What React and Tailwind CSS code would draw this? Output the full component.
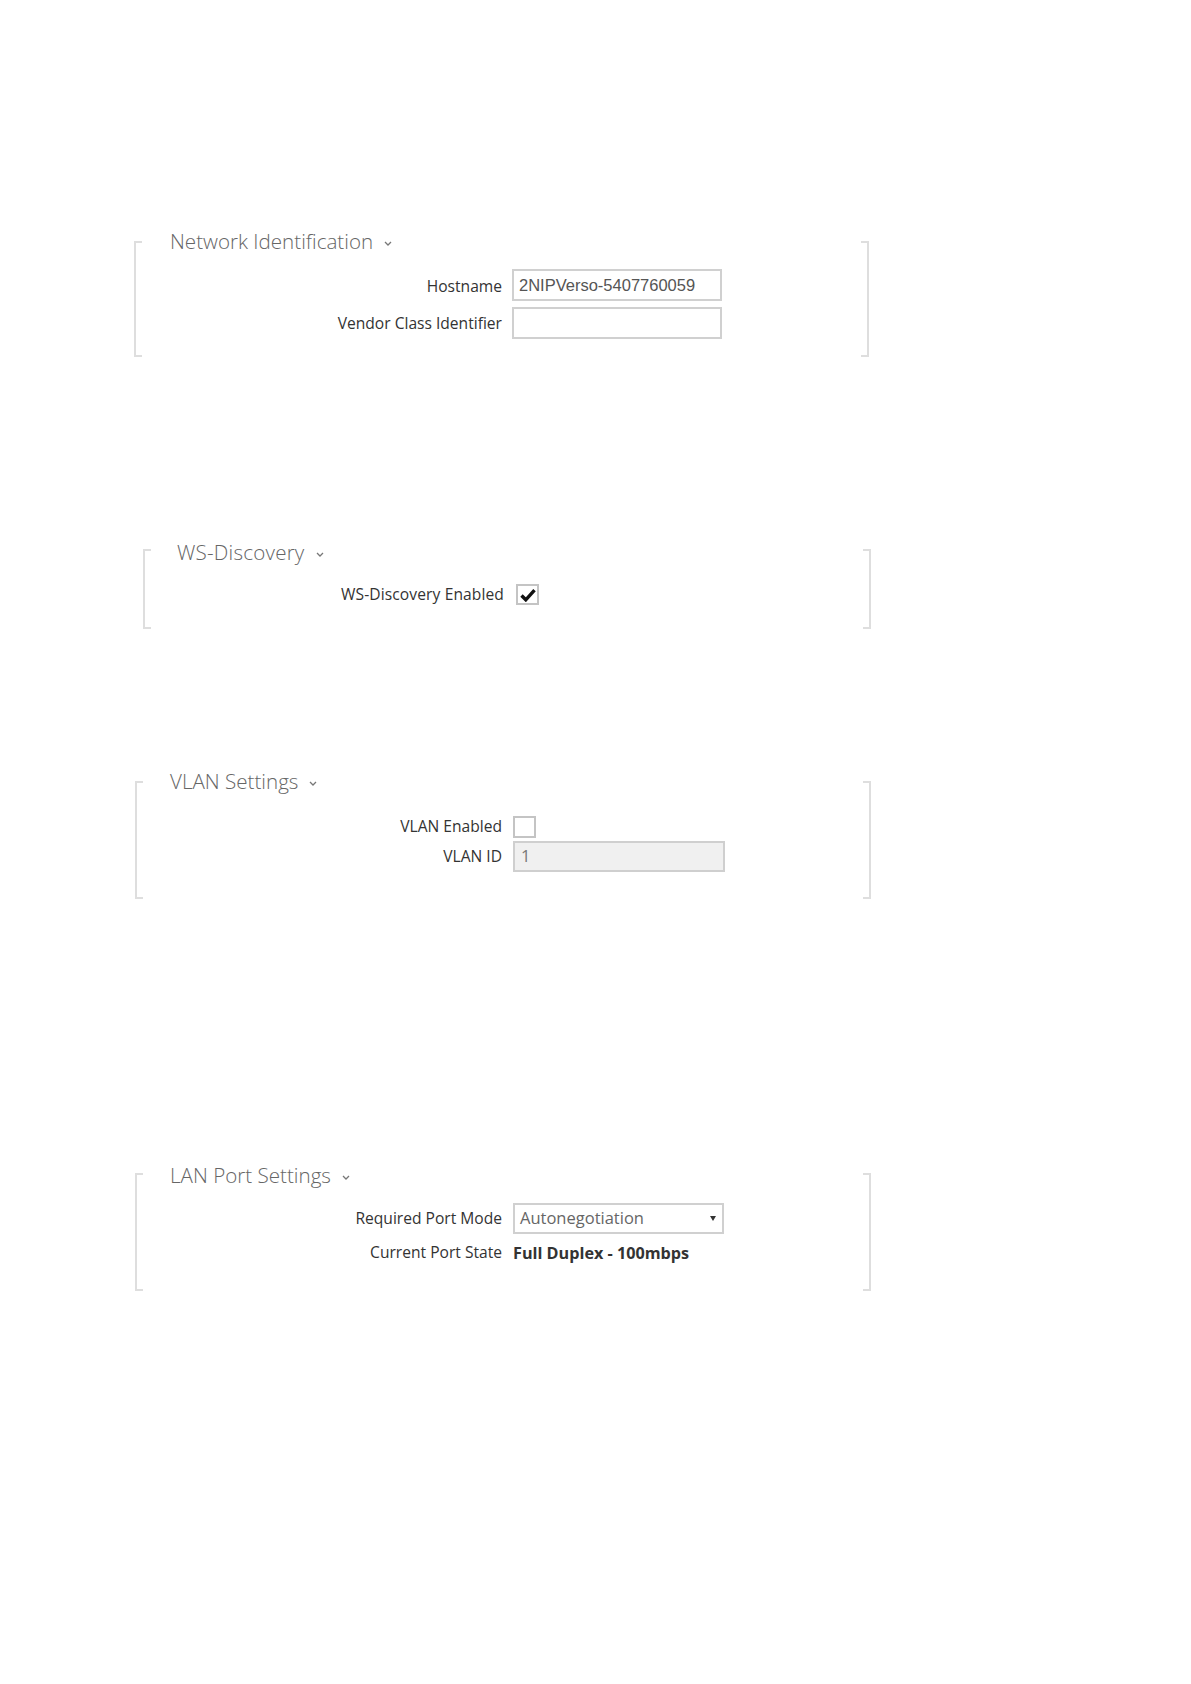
import React from "react";

const FONT = { fontFamily: '"Open Sans", "Noto Sans", sans-serif' };

function Chevron() {
  return (
    <svg width="8" height="5" viewBox="0 0 8 5" className="ml-[11px] mt-[4px]">
      <polyline points="1,1 4,4 7,1" fill="none" stroke="#777" strokeWidth="1.3" />
    </svg>
  );
}

function Section({ width, left, mt, titleMt, titleMl, title, pb, children, tracking }) {
  return (
    <div className="flex" style={{ width, marginLeft: left, marginTop: mt }}>
      <div className="w-[8px] shrink-0 border-l-2 border-t-2 border-b-2 border-[#dedede]" />
      <div className="flex-1 flex flex-col" style={{ marginTop: titleMt, paddingBottom: pb }}>
        <div className="flex items-center h-[28px]" style={{ marginLeft: titleMl }}>
          <span className={`text-[20.6px] font-light text-[#666] leading-[28px] ${tracking ? "tracking-[0.2px]" : ""}`}>{title}</span>
          <Chevron />
        </div>
        {children}
      </div>
      <div className="w-[8px] shrink-0 border-r-2 border-t-2 border-b-2 border-[#dedede]" />
    </div>
  );
}

function Row({ labelW, gap, h, mt, label, children, tracking, labelPt = 0 }) {
  return (
    <div className="flex items-center" style={{ marginTop: mt, height: h }}>
      <div
        className={`text-right text-[15.6px] text-[#333] shrink-0 whitespace-nowrap ${tracking ? "tracking-[0.1px]" : ""}`}
        style={{ width: labelW, marginRight: gap, paddingTop: labelPt }}
      >
        {label}
      </div>
      {children}
    </div>
  );
}

function CheckBox({ checked, w, h }) {
  return (
    <div
      className="border-2 border-[#c4c4c4] bg-white flex items-center justify-center"
      style={{ width: w, height: h }}
    >
      {checked && (
        <svg width="16" height="14" viewBox="0 0 16 14">
          <path d="M1.5 7.5 L5.8 11.8 L14.5 2.2" fill="none" stroke="#111" strokeWidth="3.4" strokeLinejoin="miter" />
        </svg>
      )}
    </div>
  );
}

export default function App() {
  return (
    <div className="bg-white min-h-[1684px] w-[1191px] flex flex-col" style={FONT}>
      <Section width={735} left={134} mt={241} titleMt={-14} titleMl={28} title="Network Identification" pb={18}>
        <Row labelW={360} gap={10} h={32} mt={14} label="Hostname" labelPt={3}>
          <div className="w-[210px] h-[32px] border-2 border-[#d0d0d0] flex items-center pl-[5px] text-[16.5px] text-[#555]" style={{ fontFamily: '"Liberation Sans", Arial, sans-serif' }}>
            2NIPVerso-5407760059
          </div>
        </Row>
        <Row labelW={360} gap={10} h={32} mt={6} label="Vendor Class Identifier" labelPt={2}>
          <div className="w-[210px] h-[32px] border-2 border-[#d0d0d0]" />
        </Row>
      </Section>

      <Section width={728} left={143} mt={192} titleMt={-11} titleMl={26} title="WS-Discovery" pb={24} tracking>
        <Row labelW={353} gap={12} h={21} mt={18} label="WS-Discovery Enabled" tracking labelPt={1}>
          <CheckBox checked w={23} h={21} />
        </Row>
      </Section>

      <Section width={736} left={135} mt={152} titleMt={-14} titleMl={27} title="VLAN Settings" pb={27}>
        <Row labelW={359} gap={11} h={22} mt={21} label="VLAN Enabled">
          <CheckBox w={23} h={22} />
        </Row>
        <Row labelW={359} gap={11} h={31} mt={3} label="VLAN ID" labelPt={1}>
          <div className="w-[212px] h-[31px] border-2 border-[#cfcfcf] bg-[#f0f0f0] flex items-center pl-[6px] text-[16.5px] text-[#777]">
            1
          </div>
        </Row>
      </Section>

      <Section width={736} left={135} mt={274} titleMt={-12} titleMl={27} title="LAN Port Settings" pb={27}>
        <Row labelW={359} gap={11} h={31} mt={14} label="Required Port Mode" labelPt={1}>
          <div className="w-[211px] h-[31px] border-2 border-[#d0d0d0] flex items-center justify-between pl-[5px] pr-[6px] text-[16.5px] text-[#666]">
            <span>Autonegotiation</span>
            <svg width="6" height="5" viewBox="0 0 6 5">
              <polygon points="0,0 6,0 3,5" fill="#333" />
            </svg>
          </div>
        </Row>
        <Row labelW={359} gap={11} h={22} mt={8} label="Current Port State">
          <span className="text-[16.2px] font-bold text-[#333] whitespace-nowrap">Full Duplex - 100mbps</span>
        </Row>
      </Section>
    </div>
  );
}
